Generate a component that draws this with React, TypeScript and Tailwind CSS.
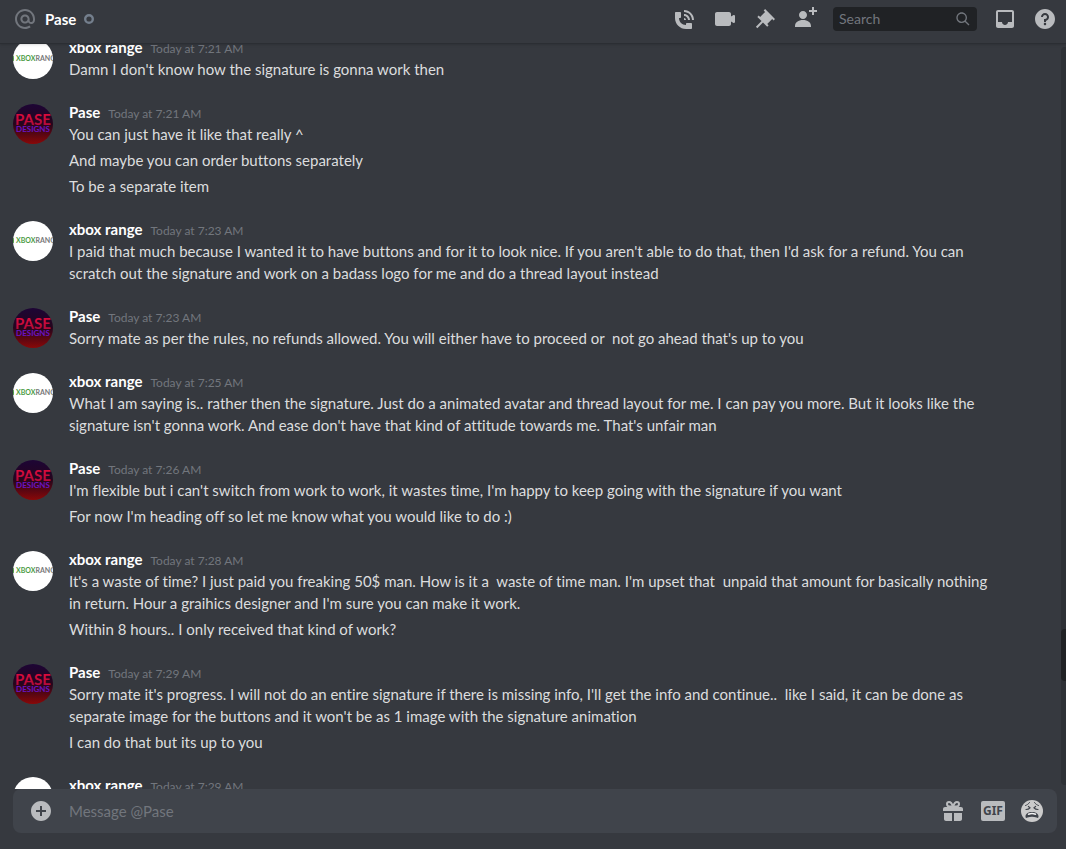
import { ReactNode } from 'react';

type Author = 'xbox range' | 'Pase';

interface Group {
  author: Author;
  time: string;
  messages: string[];
}

const groups: Group[] = [
  {
    author: 'xbox range',
    time: '7:21 AM',
    messages: ["Damn I don't know how the signature is gonna work then"],
  },
  {
    author: 'Pase',
    time: '7:21 AM',
    messages: [
      'You can just have it like that really ^',
      'And maybe you can order buttons separately',
      'To be a separate item',
    ],
  },
  {
    author: 'xbox range',
    time: '7:23 AM',
    messages: [
      "I paid that much because I wanted it to have buttons and for it to look nice. If you aren't able to do that, then I'd ask for a refund. You can\nscratch out the signature and work on a badass logo for me and do a thread layout instead",
    ],
  },
  {
    author: 'Pase',
    time: '7:23 AM',
    messages: ["Sorry mate as per the rules, no refunds allowed. You will either have to proceed or  not go ahead that's up to you"],
  },
  {
    author: 'xbox range',
    time: '7:25 AM',
    messages: [
      "What I am saying is.. rather then the signature. Just do a animated avatar and thread layout for me. I can pay you more. But it looks like the\nsignature isn't gonna work. And ease don't have that kind of attitude towards me. That's unfair man",
    ],
  },
  {
    author: 'Pase',
    time: '7:26 AM',
    messages: [
      "I'm flexible but i can't switch from work to work, it wastes time, I'm happy to keep going with the signature if you want",
      "For now I'm heading off so let me know what you would like to do :)",
    ],
  },
  {
    author: 'xbox range',
    time: '7:28 AM',
    messages: [
      "It's a waste of time? I just paid you freaking 50$ man. How is it a  waste of time man. I'm upset that  unpaid that amount for basically nothing\nin return. Hour a graihics designer and I'm sure you can make it work.",
      'Within 8 hours.. I only received that kind of work?',
    ],
  },
  {
    author: 'Pase',
    time: '7:29 AM',
    messages: [
      "Sorry mate it's progress. I will not do an entire signature if there is missing info, I'll get the info and continue..  like I said, it can be done as\nseparate image for the buttons and it won't be as 1 image with the signature animation",
      'I can do that but its up to you',
    ],
  },
  { author: 'xbox range', time: '7:29 AM', messages: [] },
];

const icons = {
  at: 'M12 2C6.486 2 2 6.486 2 12C2 17.515 6.486 22 12 22C14.039 22 15.993 21.398 17.652 20.259L16.521 18.611C15.195 19.519 13.633 20 12 20C7.589 20 4 16.411 4 12C4 7.589 7.589 4 12 4C16.411 4 20 7.589 20 12V12.782C20 14.17 19.402 15 18.4 15L18.398 15.018C18.338 15.005 18.273 15 18.209 15H18C17.437 15 16.6 14.182 16.6 13.631V12C16.6 9.464 14.537 7.4 12 7.4C9.463 7.4 7.4 9.463 7.4 12C7.4 14.537 9.463 16.6 12 16.6C13.234 16.6 14.35 16.106 15.177 15.313C15.826 16.269 16.93 17 18 17L18.002 16.981C18.064 16.994 18.129 17 18.195 17H18.4C20.552 17 22 15.306 22 12.782V12C22 6.486 17.514 2 12 2ZM12 14.599C10.566 14.599 9.4 13.433 9.4 11.999C9.4 10.565 10.566 9.399 12 9.399C13.434 9.399 14.6 10.565 14.6 11.999C14.6 13.433 13.434 14.599 12 14.599Z',
  call: 'M11 5V3C16.515 3 21 7.486 21 13H19C19 8.589 15.411 5 11 5ZM17 13C17 9.691 14.309 7 11 7V9C13.206 9 15 10.795 15 13H17ZM11 11V13H13C13 11.896 12.105 11 11 11ZM14 16H18C18.553 16 19 16.447 19 17V21C19 21.553 18.553 22 18 22H13C6.925 22 2 17.075 2 11V6C2 5.447 2.448 5 3 5H7C7.553 5 8 5.447 8 6V10C8 10.553 7.553 11 7 11H6C6.063 14.938 9 18 13 18V17C13 16.447 13.447 16 14 16Z',
  video: 'M21.526 8.149C21.231 7.966 20.862 7.951 20.553 8.105L18 9.382V7C18 5.897 17.103 5 16 5H4C2.897 5 2 5.897 2 7V17C2 18.104 2.897 19 4 19H16C17.103 19 18 18.104 18 17V14.618L20.553 15.894C20.694 15.965 20.847 16 21 16C21.183 16 21.365 15.949 21.526 15.851C21.82 15.668 22 15.347 22 15V9C22 8.653 21.82 8.332 21.526 8.149Z',
  pin: 'M22 12L12.101 2.101L10.686 3.514L12.101 4.929L7.151 9.878V9.88L5.736 8.465L4.322 9.88L8.565 14.122L2.908 19.778L4.322 21.192L9.979 15.536L14.222 19.778L15.636 18.364L14.222 16.95L19.171 12H19.172L20.586 13.414L22 12Z',
  addUser: 'M21 3H24V5H21V8H19V5H16V3H19V0H21V3ZM10 12C12.205 12 14 10.205 14 8C14 5.795 12.205 4 10 4C7.795 4 6 5.795 6 8C6 10.205 7.795 12 10 12ZM10 13C5.289 13 2 15.467 2 19V20H18V19C18 15.467 14.711 13 10 13Z',
  search: 'M21.707 20.293L16.314 14.9C17.403 13.504 18 11.799 18 10C18 7.863 17.167 5.854 15.656 4.344C14.146 2.832 12.137 2 10 2C7.863 2 5.854 2.832 4.344 4.344C2.833 5.854 2 7.863 2 10C2 12.137 2.833 14.146 4.344 15.656C5.854 17.168 7.863 18 10 18C11.799 18 13.504 17.404 14.9 16.314L20.293 21.706L21.707 20.293ZM10 16C8.397 16 6.891 15.376 5.758 14.243C4.624 13.11 4 11.603 4 10C4 8.398 4.624 6.891 5.758 5.758C6.891 4.624 8.397 4 10 4C11.603 4 13.109 4.624 14.242 5.758C15.376 6.891 16 8.398 16 10C16 11.603 15.376 13.11 14.242 14.243C13.109 15.376 11.603 16 10 16Z',
  inbox: 'M19 3H4.99C3.88 3 3.01 3.89 3.01 5L3 19C3 20.1 3.88 21 4.99 21H19C20.1 21 21 20.1 21 19V5C21 3.89 20.1 3 19 3ZM19 15H15C15 16.66 13.65 18 12 18C10.35 18 9 16.66 9 15H4.99V5H19V15Z',
  help: 'M12 2C6.486 2 2 6.487 2 12C2 17.515 6.486 22 12 22C17.514 22 22 17.515 22 12C22 6.487 17.514 2 12 2ZM12 18.25C11.31 18.25 10.75 17.691 10.75 17C10.75 16.31 11.31 15.75 12 15.75C12.69 15.75 13.25 16.31 13.25 17C13.25 17.691 12.69 18.25 12 18.25ZM13 13.875V15H11V12H12C13.104 12 14 11.103 14 10C14 8.896 13.104 8 12 8C10.896 8 10 8.896 10 10H8C8 7.795 9.795 6 12 6C14.205 6 16 7.795 16 10C16 11.861 14.723 13.429 13 13.875Z',
  plus: 'M12 2C6.486 2 2 6.486 2 12C2 17.514 6.486 22 12 22C17.514 22 22 17.514 22 12C22 6.486 17.514 2 12 2ZM17 13H13V17H11V13H7V11H11V7H13V11H17V13Z',
};

function Icon({ d, className = 'size-6' }: { d: string; className?: string }) {
  return (
    <svg viewBox="0 0 24 24" fill="currentColor" fillRule="evenodd" className={className} aria-hidden="true">
      <path d={d} />
    </svg>
  );
}

function IconButton({ label, children }: { label: string; children: ReactNode }) {
  return (
    <button type="button" aria-label={label} className="shrink-0 text-[#b9bbbe] hover:text-[#dcddde]">
      {children}
    </button>
  );
}

function Avatar({ author }: { author: Author }) {
  if (author === 'Pase') {
    return (
      <svg viewBox="0 0 40 40" className="mt-[2px] size-10 shrink-0 rounded-full" aria-hidden="true">
        <defs>
          <linearGradient id="pase-bg" x1="0" y1="0" x2="0" y2="1">
            <stop offset="0" stopColor="#1d0535" />
            <stop offset="0.5" stopColor="#25051c" />
            <stop offset="1" stopColor="#8a0808" />
          </linearGradient>
          <linearGradient id="pase-text" x1="0" y1="0" x2="0" y2="1">
            <stop offset="0" stopColor="#e80c3c" />
            <stop offset="1" stopColor="#a80a3c" />
          </linearGradient>
        </defs>
        <rect width="40" height="40" fill="url(#pase-bg)" />
        <text x="20" y="21" textAnchor="middle" fontSize="15" fontWeight="700" fontFamily="Lato, sans-serif" fill="url(#pase-text)">PASE</text>
        <text x="20" y="28" textAnchor="middle" fontSize="8" fontWeight="700" fontFamily="Lato, sans-serif" fill="#6a14c4">DESIGNS</text>
      </svg>
    );
  }
  return (
    <svg viewBox="0 0 40 40" className="mt-[2px] size-10 shrink-0 rounded-full" aria-hidden="true">
      <rect width="40" height="40" fill="#fff" />
      <rect y="17" width="1" height="5" fill="#4c9c45" />
      <text x="3" y="22" fontSize="7" fontFamily="Lato, sans-serif" fontWeight="700">
        <tspan fill="#4c9c45">XBOX</tspan>
        <tspan fill="#777">RANGE</tspan>
      </text>
    </svg>
  );
}

function GiftIcon() {
  return (
    <svg viewBox="0 0 24 24" className="size-6" fill="currentColor" aria-hidden="true">
      <path d="M3 14H11V22H5C3.9 22 3 21.1 3 20ZM13 14H21V20C21 21.1 20.1 22 19 22H13Z" />
      <path d="M4 8H20C21.1 8 22 8.9 22 10V12H2V10C2 8.9 2.9 8 4 8Z" />
      <path d="M12 7.5C11 4.5 9.7 3 8 3C6.7 3 6 3.9 6 5C6 6.6 7.5 7.5 9 7.5ZM12 7.5C13 4.5 14.3 3 16 3C17.3 3 18 3.9 18 5C18 6.6 16.5 7.5 15 7.5Z" fill="none" stroke="currentColor" strokeWidth="2" />
    </svg>
  );
}

function GifIcon() {
  return (
    <svg viewBox="0 0 24 24" className="size-6" aria-hidden="true">
      <rect y="2" width="24" height="20" rx="2" fill="currentColor" />
      <text x="12" y="16" textAnchor="middle" fontSize="12" fontWeight="700" fontFamily="'Noto Sans', sans-serif" fill="#40444b">GIF</text>
    </svg>
  );
}

function WearyIcon() {
  return (
    <svg viewBox="0 0 24 24" className="size-6" fill="none" stroke="#40444b" strokeLinecap="round" aria-hidden="true">
      <circle cx="11" cy="12" r="11" fill="#cbcbcb" stroke="none" />
      <path d="M8.5 3.5C7.500 5 6 6 4.500 6.500M13.500 3.500C14.500 5 16 6 17.500 6.500" strokeWidth="1" />
      <path d="M5 10.500C6.500 10.500 8 10 9 8.800L7.400 7.500M17 10.500C15.500 10.500 14 10 13 8.800L14.600 7.500" strokeWidth="1.200" />
      <path d="M4.500 17.500C4.500 14.800 7 13 11 13S17.500 14.800 17.500 17.500C17.500 19.300 16.500 19 15.500 18.500C12.500 17.600 9.500 17.600 6.500 18.500C5.500 19 4.500 19.300 4.500 17.500Z" fill="#40444b" stroke="none" />
      <path d="M7.500 15.300C9.500 14.500 12.500 14.500 14.500 15.300" stroke="#f4f4f4" strokeWidth="1.500" />
    </svg>
  );
}

function Header() {
  return (
    <header className="z-10 flex shrink-0 items-center gap-4 border-b border-[#2b2e33] pt-px pr-[9px] pb-1.5 pl-[13px] shadow-sm">
      <div className="flex flex-1 items-center gap-2">
        <Icon d={icons.at} className="size-6 text-[#72767d]" />
        <h1 className="text-[15px] leading-9 font-bold text-white">Pase</h1>
        <svg viewBox="0 0 10 10" className="size-[10px]" role="img" aria-label="Offline">
          <circle cx="5" cy="5" r="3.8" fill="none" stroke="#747f8d" strokeWidth="2.4" />
        </svg>
      </div>
      <IconButton label="Start voice call"><Icon d={icons.call} /></IconButton>
      <IconButton label="Start video call"><Icon d={icons.video} /></IconButton>
      <IconButton label="Pinned messages"><Icon d={icons.pin} /></IconButton>
      <IconButton label="Add friends to DM"><Icon d={icons.addUser} /></IconButton>
      <label className="flex h-6 w-36 items-center rounded bg-[#202225] px-1.5 text-[#72767d]">
        <input type="text" placeholder="Search" aria-label="Search" className="min-w-0 flex-1 text-sm outline-none placeholder:text-[#72767d]" />
        <Icon d={icons.search} className="size-4" />
      </label>
      <IconButton label="Inbox"><Icon d={icons.inbox} /></IconButton>
      <IconButton label="Help"><Icon d={icons.help} /></IconButton>
    </header>
  );
}

function MessageGroup({ group }: { group: Group }) {
  return (
    <li className="flex gap-4 pb-[22px]">
      <Avatar author={group.author} />
      <div className="min-w-0 flex-1">
        <h2 className="flex h-[21px] items-baseline gap-2 leading-5">
          <span className="text-[15px] leading-5 font-bold text-white">{group.author}</span>
          <time className="text-xs leading-5 text-[#72767d]">Today at {group.time}</time>
        </h2>
        <div className="flex flex-col gap-1">
          {group.messages.map((message) => (
            <p key={message} className="text-[15px] leading-[22px] whitespace-pre-wrap text-[#dcddde]">{message}</p>
          ))}
        </div>
      </div>
    </li>
  );
}

export default function App() {
  return (
    <div className="flex h-screen flex-col bg-[#36393f] font-[Lato,sans-serif] [font-variant-ligatures:none]">
      <Header />
      <main className="flex min-h-0 flex-1 overflow-hidden">
        <ol className="-mt-[7px] min-w-0 flex-1 pl-[13px]">
          {groups.map((group, i) => (
            <MessageGroup key={i} group={group} />
          ))}
        </ol>
        <div className="mt-[3px] mb-1 flex w-[5px] flex-col rounded-l bg-[#2e3136]">
          <div className="grow-[582]"></div>
          <div className="h-[52px] rounded-l bg-[#202225]"></div>
          <div className="grow-[104]"></div>
        </div>
      </main>
      <form className="mr-[9px] mb-4 ml-[13px] flex h-11 shrink-0 items-center gap-4 rounded-lg bg-[#40444b] pr-3 pl-4">
        <IconButton label="Attach a file"><Icon d={icons.plus} /></IconButton>
        <input type="text" placeholder="Message @Pase" aria-label="Message @Pase" className="min-w-0 flex-1 text-[15px] outline-none placeholder:text-[#72767d]" />
        <IconButton label="Send a gift"><GiftIcon /></IconButton>
        <IconButton label="Open GIF picker"><GifIcon /></IconButton>
        <IconButton label="Select emoji"><WearyIcon /></IconButton>
      </form>
    </div>
  );
}
